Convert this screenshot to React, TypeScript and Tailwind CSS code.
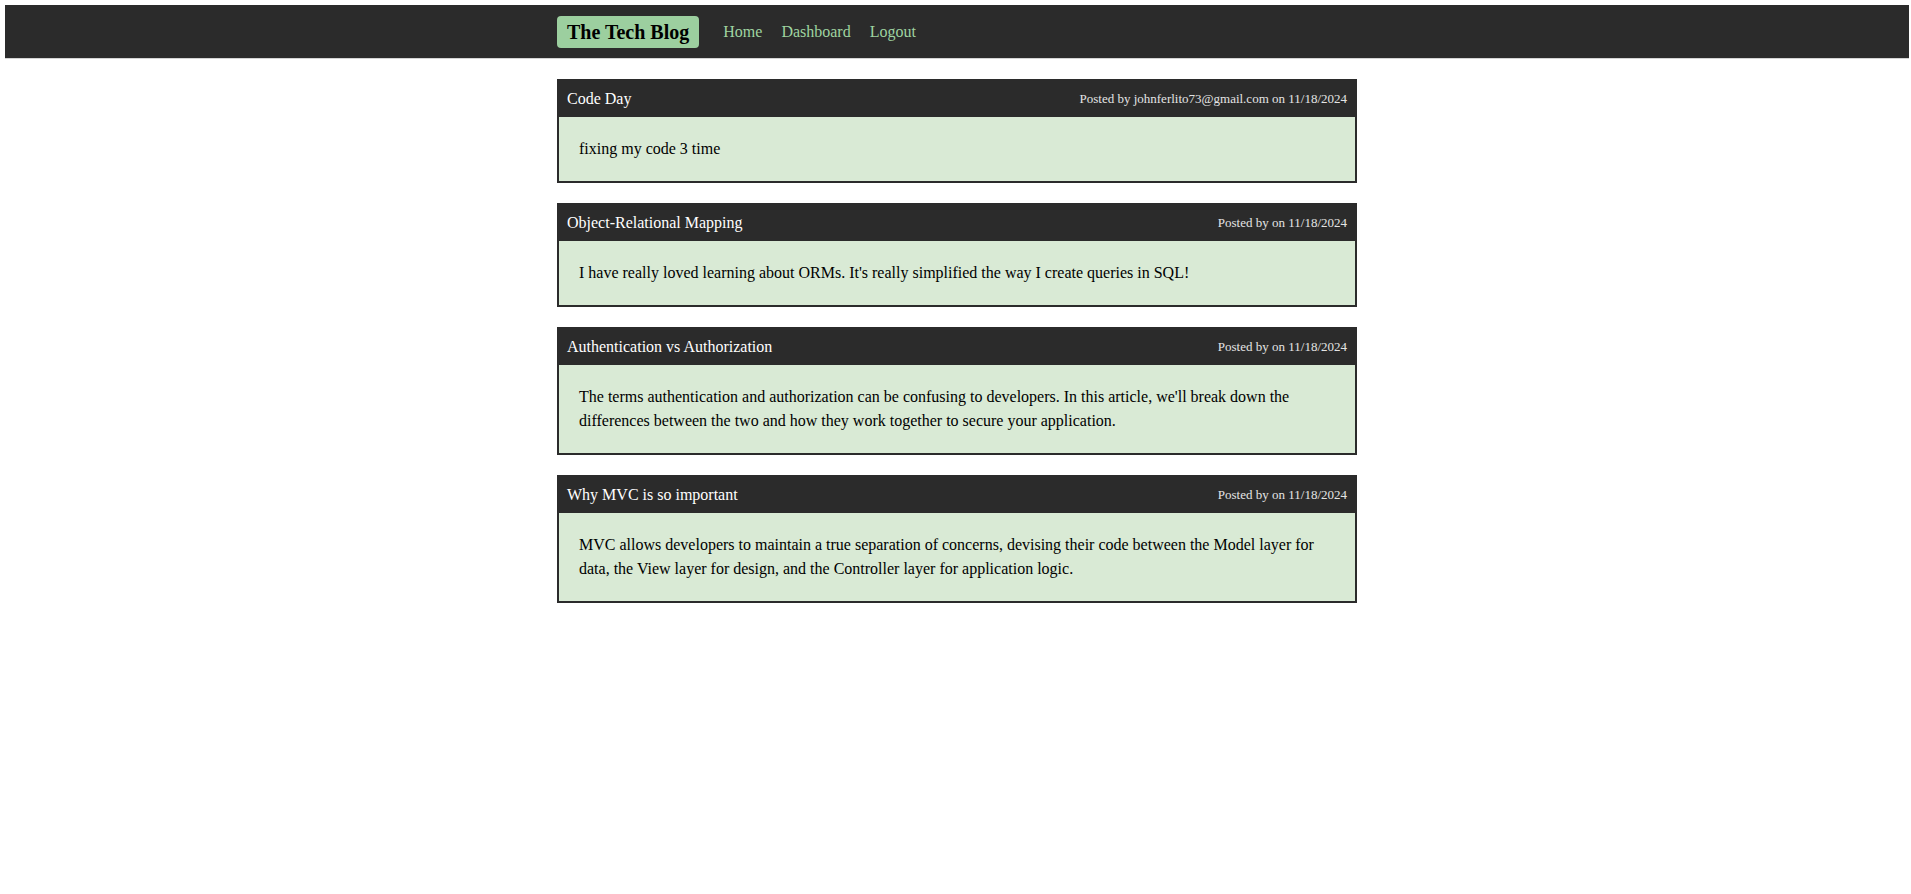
import React from "react";

const posts = [
  {
    title: "Code Day",
    by: "Posted by johnferlito73@gmail.com on 11/18/2024",
    body: "fixing my code 3 time",
  },
  {
    title: "Object-Relational Mapping",
    by: "Posted by on 11/18/2024",
    body: "I have really loved learning about ORMs. It's really simplified the way I create queries in SQL!",
  },
  {
    title: "Authentication vs Authorization",
    by: "Posted by on 11/18/2024",
    body: "The terms authentication and authorization can be confusing to developers. In this article, we'll break down the differences between the two and how they work together to secure your application.",
  },
  {
    title: "Why MVC is so important",
    by: "Posted by on 11/18/2024",
    body: "MVC allows developers to maintain a true separation of concerns, devising their code between the Model layer for data, the View layer for design, and the Controller layer for application logic.",
  },
];

export default function App() {
  return (
    <div
      className="min-h-screen bg-white pl-[5px] pr-[2px] pt-[5px] text-black"
      style={{ fontFamily: '"Liberation Serif", "Times New Roman", serif' }}
    >
      <header className="h-[54px] bg-[#2b2b2b] border-b border-[#d4d4d4]">
        <div className="mx-auto flex h-[53px] w-[800px] items-center">
          <div className="flex h-[32px] items-center rounded-[4px] bg-[#9ccf9f] px-[10px] text-[20px] font-bold leading-none text-black">
            The Tech Blog
          </div>
          <nav className="ml-[24px] flex items-center gap-[19px] text-[16px] text-[#9fd4a0]">
            <a href="#" className="leading-none">Home</a>
            <a href="#" className="leading-none">Dashboard</a>
            <a href="#" className="leading-none">Logout</a>
          </nav>
        </div>
      </header>

      <main className="mx-auto mt-[20px] flex w-[800px] flex-col gap-[20px]">
        {posts.map((p) => (
          <article key={p.title} className="border-2 border-[#2b2b2b]">
            <div className="flex h-[36px] items-center justify-between bg-[#2b2b2b] px-[8px]">
              <span className="text-[16px] text-white">{p.title}</span>
              <span className="text-[13px] text-[#e4e4e4]">{p.by}</span>
            </div>
            <div className="bg-[#d9ead5] px-[20px] py-[20px] text-[16px] leading-[24px]">
              {p.body}
            </div>
          </article>
        ))}
      </main>
    </div>
  );
}
